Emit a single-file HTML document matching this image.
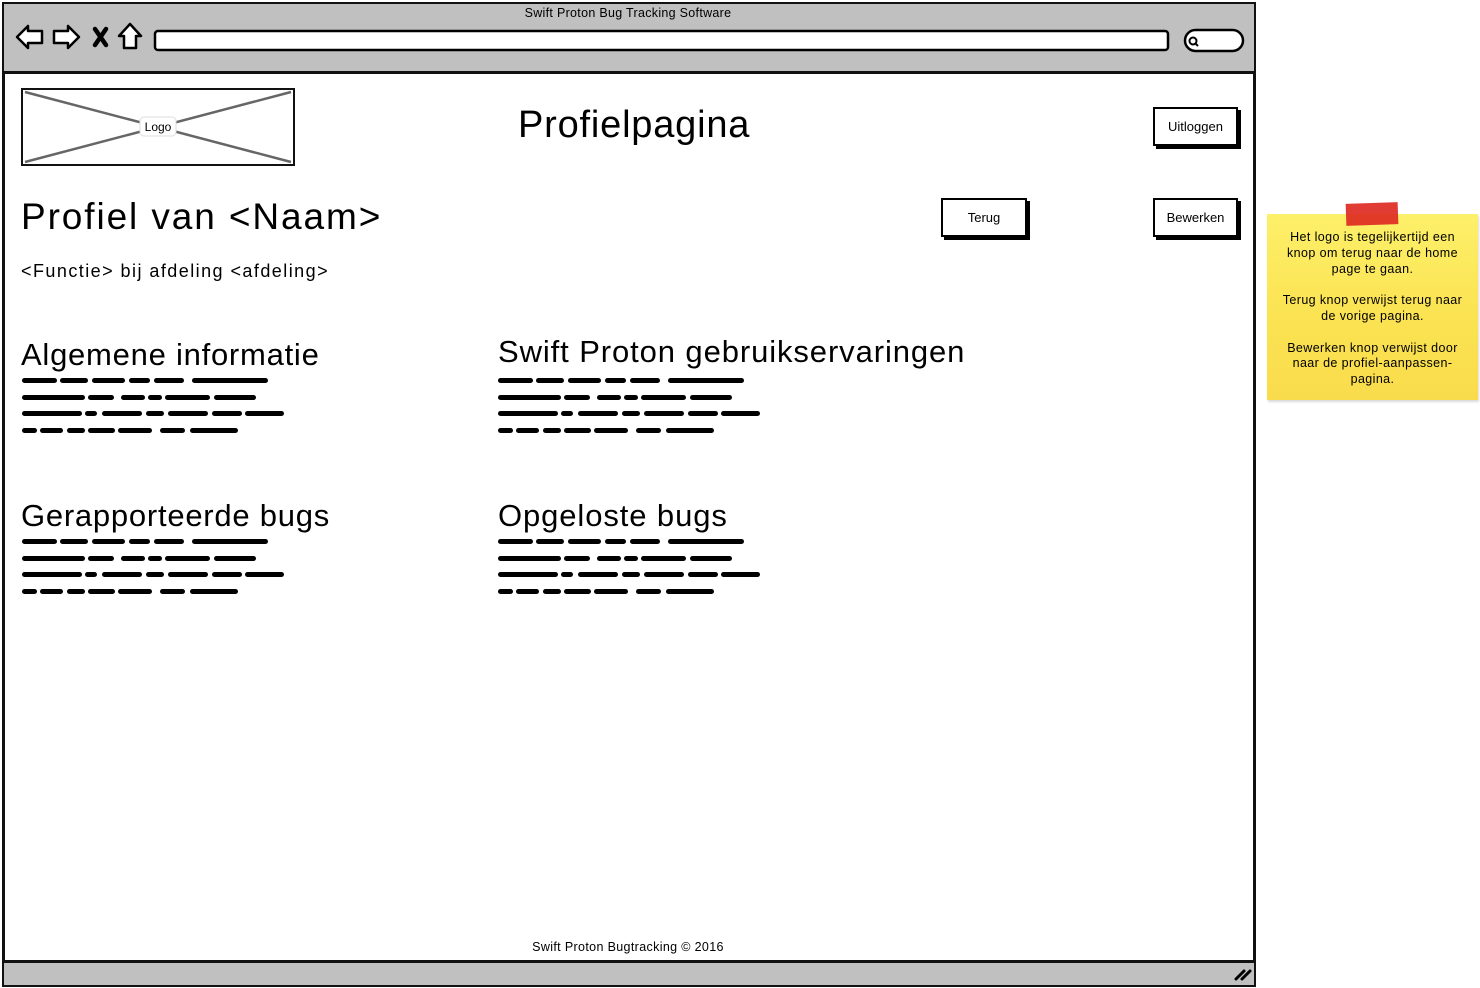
<!DOCTYPE html>
<html><head><meta charset="utf-8">
<style>
*{margin:0;padding:0;box-sizing:border-box}
body{width:1480px;height:988px;background:#fff;position:relative;overflow:hidden;font-family:"Liberation Sans",sans-serif;color:#000}
.abs{position:absolute}
.btn{position:absolute;border:2px solid #000;background:#fff;box-shadow:3px 3px 0 #000;font-size:13px;text-align:center;display:flex;align-items:center;justify-content:center}
.h2{position:absolute;font-size:31px;white-space:nowrap}
.sc{position:absolute;height:5px}
.sc span{position:absolute;top:0;height:5px;background:#000;border-radius:2.5px}
</style></head><body>
<div class="abs" style="left:2px;top:2px;width:1254px;height:985px;border:3px solid #111;background:#fff"></div>
<div class="abs" style="left:4px;top:4px;width:1250px;height:70px;background:#c0c0c0;border-bottom:3px solid #111"></div>
<div class="abs" style="left:4px;top:960px;width:1250px;height:25px;background:#c0c0c0;border-top:3px solid #111"></div>
<div class="abs" style="left:0;top:6px;width:1256px;text-align:center;font-size:12.5px;letter-spacing:0.3px">Swift Proton Bug Tracking Software</div>
<svg class="abs" style="left:0;top:0" width="1256" height="72">
<g fill="#fff" stroke="#000" stroke-width="2.5" stroke-linejoin="round">
<path d="M17 37 L28 26 L28 31 L42 31 L42 43 L28 43 L28 48 Z"/>
<path d="M79 37 L68 26 L68 31 L54 31 L54 43 L68 43 L68 48 Z"/>
<path d="M130 24 L141 36 L136 36 L136 48 L124 48 L124 36 L119 36 Z"/>
</g>
<path d="M95 29 L106 45 M106 29 L95 45" stroke="#000" stroke-width="4.5" stroke-linecap="round"/>
<rect x="155" y="31" width="1013" height="19" rx="3" fill="#fff" stroke="#000" stroke-width="2.5"/>
<rect x="1185" y="30" width="58" height="21" rx="10.5" fill="#fff" stroke="#000" stroke-width="2.5"/>
<circle cx="1193" cy="41" r="3.5" fill="none" stroke="#000" stroke-width="2"/>
<path d="M1195 43 L1198 46" stroke="#000" stroke-width="2"/>
</svg>
<svg class="abs" style="left:1230px;top:964px" width="24" height="20"><path d="M6 15 L14 7 M12 15 L20 7" stroke="#000" stroke-width="3" stroke-linecap="round"/></svg>

<svg class="abs" style="left:21px;top:88px" width="275" height="79">
<rect x="1" y="1" width="272" height="76" fill="#fff" stroke="#111" stroke-width="2"/>
<path d="M4 4 L270 74 M270 4 L4 74" stroke="#666" stroke-width="2.5"/>
<rect x="119" y="29" width="36" height="19" rx="4" fill="#fff" stroke="#ddd"/>
<text x="137" y="43" font-size="12" text-anchor="middle" font-family="Liberation Sans">Logo</text>
</svg>

<div class="abs" style="left:518px;top:104px;font-size:38px;letter-spacing:0.8px">Profielpagina</div>
<div class="btn" style="left:1153px;top:107px;width:85px;height:39px">Uitloggen</div>

<div class="abs" style="left:21px;top:196px;font-size:37px;letter-spacing:1.9px">Profiel van &lt;Naam&gt;</div>
<div class="abs" style="left:21px;top:261px;font-size:18px;letter-spacing:1.45px">&lt;Functie&gt; bij afdeling &lt;afdeling&gt;</div>
<div class="btn" style="left:941px;top:198px;width:86px;height:39px">Terug</div>
<div class="btn" style="left:1153px;top:198px;width:85px;height:39px">Bewerken</div>

<div class="h2" style="left:21px;top:337px;letter-spacing:0.75px">Algemene informatie</div>
<div class="h2" style="left:498px;top:334px;letter-spacing:0.9px">Swift Proton gebruikservaringen</div>
<div class="h2" style="left:21px;top:498px;letter-spacing:0.75px">Gerapporteerde bugs</div>
<div class="h2" style="left:498px;top:498px;letter-spacing:0.9px">Opgeloste bugs</div>

<div class="sc" style="left:22px;top:378px">
<span style="left:0;width:35px"></span><span style="left:38px;width:28px"></span><span style="left:70px;width:33px"></span><span style="left:107px;width:21px"></span><span style="left:132px;width:30px"></span><span style="left:170px;width:76px"></span></div>
<div class="sc" style="left:22px;top:395px">
<span style="left:0;width:63px"></span><span style="left:66px;width:26px"></span><span style="left:99px;width:24px"></span><span style="left:126px;width:14px"></span><span style="left:143px;width:45px"></span><span style="left:192px;width:42px"></span></div>
<div class="sc" style="left:22px;top:411px">
<span style="left:0;width:60px"></span><span style="left:63px;width:12px"></span><span style="left:80px;width:40px"></span><span style="left:124px;width:18px"></span><span style="left:146px;width:40px"></span><span style="left:190px;width:30px"></span><span style="left:223px;width:39px"></span></div>
<div class="sc" style="left:22px;top:428px">
<span style="left:0;width:15px"></span><span style="left:18px;width:23px"></span><span style="left:45px;width:18px"></span><span style="left:66px;width:27px"></span><span style="left:96px;width:34px"></span><span style="left:138px;width:25px"></span><span style="left:168px;width:48px"></span></div>

<div class="sc" style="left:498px;top:378px">
<span style="left:0;width:35px"></span><span style="left:38px;width:28px"></span><span style="left:70px;width:33px"></span><span style="left:107px;width:21px"></span><span style="left:132px;width:30px"></span><span style="left:170px;width:76px"></span></div>
<div class="sc" style="left:498px;top:395px">
<span style="left:0;width:63px"></span><span style="left:66px;width:26px"></span><span style="left:99px;width:24px"></span><span style="left:126px;width:14px"></span><span style="left:143px;width:45px"></span><span style="left:192px;width:42px"></span></div>
<div class="sc" style="left:498px;top:411px">
<span style="left:0;width:60px"></span><span style="left:63px;width:12px"></span><span style="left:80px;width:40px"></span><span style="left:124px;width:18px"></span><span style="left:146px;width:40px"></span><span style="left:190px;width:30px"></span><span style="left:223px;width:39px"></span></div>
<div class="sc" style="left:498px;top:428px">
<span style="left:0;width:15px"></span><span style="left:18px;width:23px"></span><span style="left:45px;width:18px"></span><span style="left:66px;width:27px"></span><span style="left:96px;width:34px"></span><span style="left:138px;width:25px"></span><span style="left:168px;width:48px"></span></div>

<div class="sc" style="left:22px;top:539px">
<span style="left:0;width:35px"></span><span style="left:38px;width:28px"></span><span style="left:70px;width:33px"></span><span style="left:107px;width:21px"></span><span style="left:132px;width:30px"></span><span style="left:170px;width:76px"></span></div>
<div class="sc" style="left:22px;top:556px">
<span style="left:0;width:63px"></span><span style="left:66px;width:26px"></span><span style="left:99px;width:24px"></span><span style="left:126px;width:14px"></span><span style="left:143px;width:45px"></span><span style="left:192px;width:42px"></span></div>
<div class="sc" style="left:22px;top:572px">
<span style="left:0;width:60px"></span><span style="left:63px;width:12px"></span><span style="left:80px;width:40px"></span><span style="left:124px;width:18px"></span><span style="left:146px;width:40px"></span><span style="left:190px;width:30px"></span><span style="left:223px;width:39px"></span></div>
<div class="sc" style="left:22px;top:589px">
<span style="left:0;width:15px"></span><span style="left:18px;width:23px"></span><span style="left:45px;width:18px"></span><span style="left:66px;width:27px"></span><span style="left:96px;width:34px"></span><span style="left:138px;width:25px"></span><span style="left:168px;width:48px"></span></div>

<div class="sc" style="left:498px;top:539px">
<span style="left:0;width:35px"></span><span style="left:38px;width:28px"></span><span style="left:70px;width:33px"></span><span style="left:107px;width:21px"></span><span style="left:132px;width:30px"></span><span style="left:170px;width:76px"></span></div>
<div class="sc" style="left:498px;top:556px">
<span style="left:0;width:63px"></span><span style="left:66px;width:26px"></span><span style="left:99px;width:24px"></span><span style="left:126px;width:14px"></span><span style="left:143px;width:45px"></span><span style="left:192px;width:42px"></span></div>
<div class="sc" style="left:498px;top:572px">
<span style="left:0;width:60px"></span><span style="left:63px;width:12px"></span><span style="left:80px;width:40px"></span><span style="left:124px;width:18px"></span><span style="left:146px;width:40px"></span><span style="left:190px;width:30px"></span><span style="left:223px;width:39px"></span></div>
<div class="sc" style="left:498px;top:589px">
<span style="left:0;width:15px"></span><span style="left:18px;width:23px"></span><span style="left:45px;width:18px"></span><span style="left:66px;width:27px"></span><span style="left:96px;width:34px"></span><span style="left:138px;width:25px"></span><span style="left:168px;width:48px"></span></div>

<div class="abs" style="left:0;top:940px;width:1256px;text-align:center;font-size:12.5px;letter-spacing:0.35px">Swift Proton Bugtracking © 2016</div>

<div class="abs" style="left:1267px;top:214px;width:211px;height:186px;background:linear-gradient(180deg,#fdf06a 0%,#fbe352 55%,#f9dc4c 100%);box-shadow:1px 2px 2px rgba(0,0,0,0.15);font-size:12.5px;line-height:15.8px;text-align:center;padding-top:16px;letter-spacing:0.4px;white-space:nowrap">
Het logo is tegelijkertijd een<br>knop om terug naar de home<br>page te gaan.<br><br>Terug knop verwijst terug naar<br>de vorige pagina.<br><br>Bewerken knop verwijst door<br>naar de profiel-aanpassen-<br>pagina.</div>
<div class="abs" style="left:1346px;top:203px;width:52px;height:22px;background:#de2b22;transform:rotate(-2deg);opacity:0.92"></div>
</body></html>
